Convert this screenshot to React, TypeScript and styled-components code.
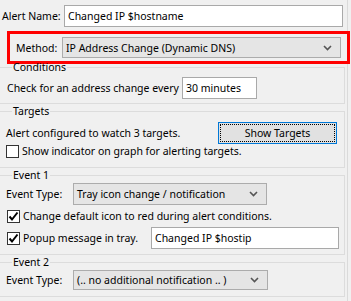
import React, { FC, ReactNode } from 'react';
import styled, { createGlobalStyle } from 'styled-components';

const Global = createGlobalStyle`
  html, body {
    margin: 0;
    padding: 0;
    background: #f0f0f0;
  }
  body {
    font-family: "Noto Sans", "Open Sans", sans-serif;
    font-size: 10.5px;
    color: #000;
  }
`;

const Page = styled.div`
  width: 347px;
  height: 301px;
  border-right: 1px solid #dadada;
  display: flex;
  flex-direction: column;
`;
const Row = styled.div<{ $mt?: number; $ml?: number }>`
  display: flex;
  align-items: center;
  margin-top: ${(p) => p.$mt ?? 0}px;
  margin-left: ${(p) => p.$ml ?? 0}px;
`;
const Label = styled.span<{ $w?: number }>`
  white-space: nowrap;
  line-height: 14px;
  width: ${(p) => (p.$w ? `${p.$w}px` : 'auto')};
  flex: none;
`;
const TextBox = styled.div<{ $w: number; $h?: number; $mr?: number }>`
  width: ${(p) => p.$w}px;
  height: ${(p) => p.$h ?? 22}px;
  margin-left: ${(p) => (p.$mr !== undefined ? 'auto' : '0')};
  margin-right: ${(p) => p.$mr ?? 0}px;
  box-sizing: border-box;
  background: #fff;
  border: 1px solid #a9a9a9;
  padding-left: 3px;
  display: flex;
  align-items: center;
  white-space: nowrap;
  flex: none;
`;
const Combo = styled.div<{ $w: number; $h?: number }>`
  width: ${(p) => p.$w}px;
  height: ${(p) => p.$h ?? 22}px;
  box-sizing: border-box;
  background: #e5e5e5;
  border: 1px solid #acacac;
  padding: 0 8px 0 3px;
  display: flex;
  align-items: center;
  justify-content: space-between;
  white-space: nowrap;
  flex: none;
`;
const Highlight = styled.div`
  margin: 4px -3px 0 7px;
  height: 33px;
  box-sizing: border-box;
  border: 3px solid #ff0000;
  display: flex;
  align-items: center;
  padding-left: 6px;
`;
const Group = styled.fieldset<{ $mt?: number; $h: number }>`
  margin: ${(p) => p.$mt ?? 0}px 2px 0 -2px;
  padding: 0 0 0 7px;
  height: ${(p) => p.$h}px;
  box-sizing: border-box;
  border: 1px solid #dcdcdc;
  min-width: 0;
  display: flex;
  flex-direction: column;
  & > legend {
    padding: 0 1px;
    margin-left: 6px;
    line-height: 14px;
  }
`;
const Box = styled.span`
  width: 13px;
  height: 13px;
  box-sizing: border-box;
  border: 1px solid #333;
  background: #fff;
  display: inline-flex;
  align-items: center;
  justify-content: center;
  flex: none;
  margin-right: 3px;
`;
const Button = styled.div`
  width: 119px;
  height: 22px;
  box-sizing: border-box;
  border: 1px solid #0078d7;
  background: #e1e1e1;
  padding: 1px;
  flex: none;
  & > span {
    display: flex;
    height: 100%;
    box-sizing: border-box;
    border: 1px dotted #000;
    align-items: center;
    justify-content: center;
  }
`;

const Chevron: FC = () => (
  <svg width="9" height="6" viewBox="0 0 9 6">
    <polyline points="1,1 4.5,4.5 8,1" fill="none" stroke="#555" strokeWidth="1.6" />
  </svg>
);

const Check: FC<{ checked?: boolean; children: ReactNode; mt?: number; ml?: number }> = ({
  checked,
  children,
  mt,
  ml,
}) => (
  <Row $mt={mt} $ml={ml}>
    <Box>
      {checked && (
        <svg width="11" height="11" viewBox="0 0 11 11">
          <polyline points="1.5,5.5 4,8.5 9.5,1.5" fill="none" stroke="#000" strokeWidth="2" />
        </svg>
      )}
    </Box>
    <Label>{children}</Label>
  </Row>
);

const App: FC = () => (
  <>
    <Global />
    <Page>
      <Row $mt={5} $ml={2}>
        <Label $w={62}>Alert Name:</Label>
        <TextBox $w={279}>Changed IP $hostname</TextBox>
      </Row>
      <Highlight>
        <Label $w={46}>Method:</Label>
        <Combo $w={279} $h={21}>
          IP Address Change (Dynamic DNS)
          <Chevron />
        </Combo>
      </Highlight>
      <Group $mt={-4} $h={44}>
        <legend>Conditions</legend>
        <Row $mt={3} $ml={1}>
          <Label $w={175}>Check for an address change every</Label>
          <TextBox $w={75}>30 minutes</TextBox>
        </Row>
      </Group>
      <Group $h={64}>
        <legend>Targets</legend>
        <Row $mt={4}>
          <Label $w={212}>Alert configured to watch 3 targets.</Label>
          <Button>
            <span>Show Targets</span>
          </Button>
        </Row>
        <Check>Show indicator on graph for alerting targets.</Check>
      </Group>
      <Group $h={87}>
        <legend>Event 1</legend>
        <Row $mt={1}>
          <Label $w={67}>Event Type:</Label>
          <Combo $w={194}>
            Tray icon change / notification
            <Chevron />
          </Combo>
        </Row>
        <Check checked mt={4} ml={1}>
          Change default icon to red during alert conditions.
        </Check>
        <Row $mt={4}>
          <Check checked ml={1}>
            Popup message in tray.
          </Check>
          <TextBox $w={188} $mr={5}>
            Changed IP $hostip
          </TextBox>
        </Row>
      </Group>
      <Group $h={42}>
        <legend>Event 2</legend>
        <Row $mt={1}>
          <Label $w={67}>Event Type:</Label>
          <Combo $w={195} $h={20}>
            (.. no additional notification .. )
            <Chevron />
          </Combo>
        </Row>
      </Group>
    </Page>
  </>
);

export default App;
